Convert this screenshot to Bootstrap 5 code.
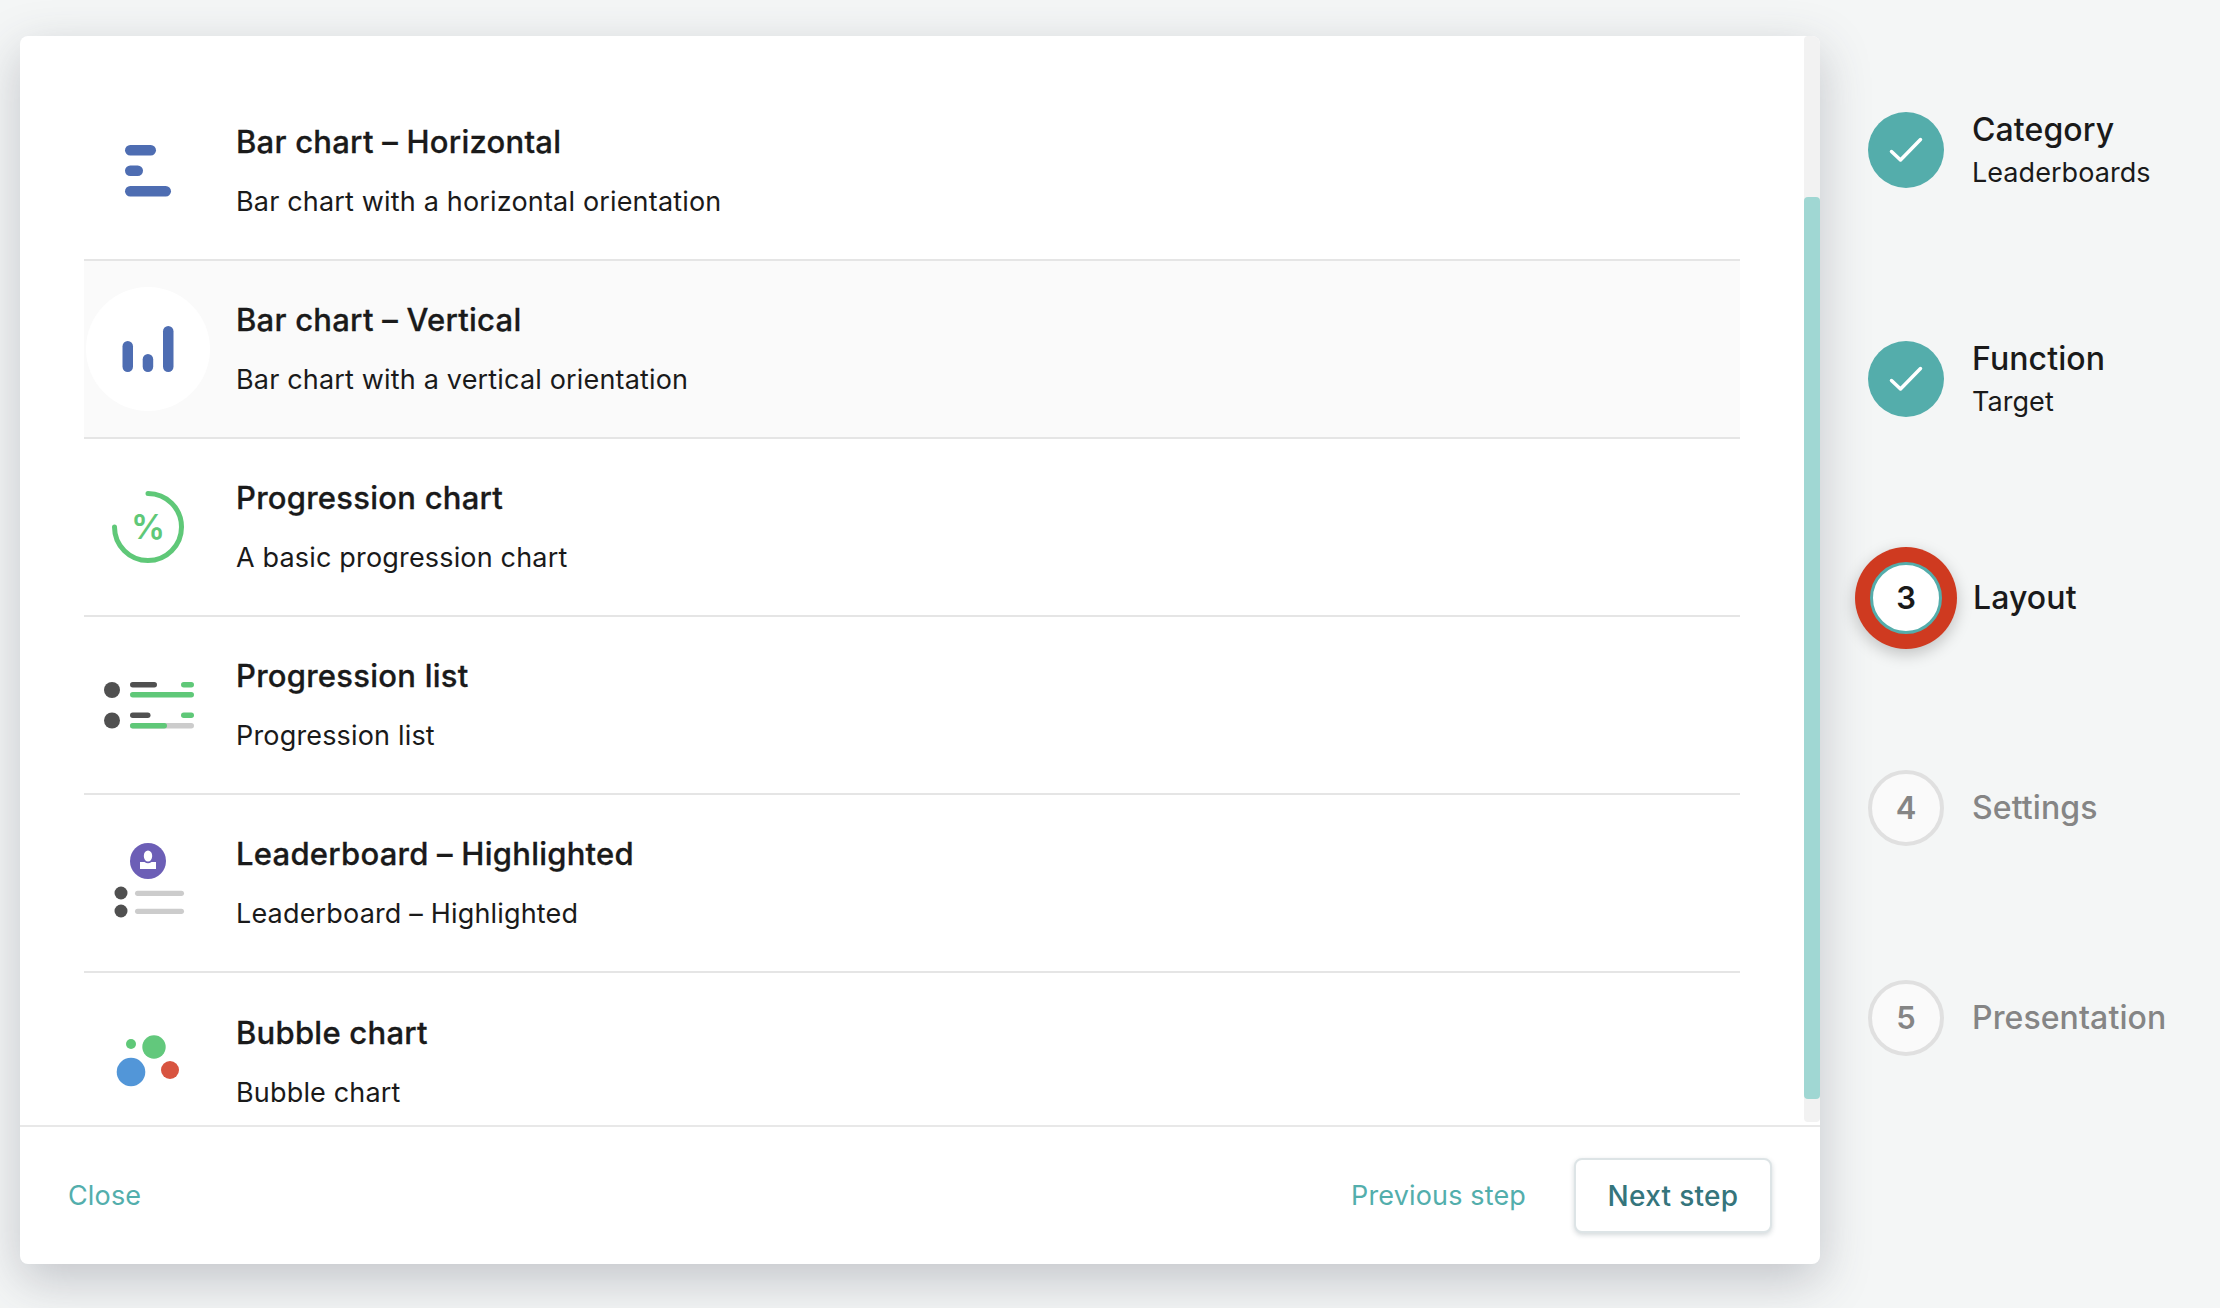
<!DOCTYPE html>
<html lang="en">
<head>
<meta charset="utf-8">
<title>Layout step</title>
<link href="https://cdn.jsdelivr.net/npm/bootstrap@5.3.0/dist/css/bootstrap.min.css" rel="stylesheet">
<style>
html, body { height: 100%; }
body { background: #f4f6f6; font-family: "Inter", "Liberation Sans", sans-serif; color: #1a1a1a; overflow: hidden; }
.shell { width: 2220px; height: 1308px; padding: 36px 0 44px 20px; }
.panel { width: 1800px; height: 1228px; background: #fff; border-radius: 8px; box-shadow: 0 16px 50px rgba(60,64,80,.27); overflow: hidden; }
.body-area { height: 1086px; }
.scroll-list { padding: 47px 64px 0; overflow: hidden; }
.row-item { height: 178px; border-bottom: 2px solid #e5e5e5; flex-shrink: 0; }
.row-item.hovered { background: #fafafa; }
.row-item:last-child { border-bottom: 0; }
.icon-box { width: 124px; height: 124px; margin-left: 2px; flex-shrink: 0; }
.icon-box.disc { background: #fff; border-radius: 50%; }
.text-box { margin-left: 26px; padding-top: 2px; }
.title-text { font-size: 31px; font-weight: 500; line-height: 40px; margin-bottom: 20px; letter-spacing: .25px; -webkit-text-stroke: .3px #1a1a1a; }
.sub-text { font-size: 27px; font-weight: 400; line-height: 40px; letter-spacing: .17px; }
.scroll-track { width: 16px; background: #f2f2f2; border-radius: 4px; flex-shrink: 0; padding-top: 161px; }
.scroll-thumb { height: 902px; background: #a0d7d3; border-radius: 4px; }
.foot-area { height: 139px; border-top: 2px solid #e8e8e8; margin-top: 3px; padding: 0 48px; }
.foot-link { font-size: 27px; color: #53aeac; text-decoration: none; letter-spacing: .15px; padding-top: 1px; }
.next-btn { width: 198px; height: 75px; background: #fff; border: 2px solid #dde4e6; border-radius: 8px; box-shadow: 0 2px 5px rgba(60,80,90,.22); font-size: 28px; font-weight: 500; color: #35757c; margin-left: 48px; letter-spacing: .3px; }
.steps-col { padding: 66px 0 0 48px; width: 400px; }
.step-item { height: 76px; margin-bottom: 134px; }
.step-item.tall { height: 95px; }
.step-dot { width: 76px; height: 76px; border-radius: 50%; flex-shrink: 0; font-size: 31px; font-weight: 600; }
.step-dot.done { background: #54adab; }
.step-dot.active { background: #fff; border: 3px solid #54adab; box-shadow: 0 0 0 15px #cf3a20, 0 5px 16px 15px rgba(0,0,0,.22); width: 72px; height: 72px; margin: 2px; color: #1a1a1a; }
.step-dot.todo { background: #fafafa; border: 4px solid #e0e0e0; color: #858585; }
.step-text { margin-left: 28px; }
.step-dot.active + .step-text { margin-left: 29px; }
.step-name { font-size: 32px; font-weight: 500; line-height: 40px; letter-spacing: .1px; }
.step-name.muted-name { color: #858585; }
.step-sub { font-size: 27px; line-height: 34px; margin-top: 5px; padding-top: 1px; letter-spacing: .05px; }
.pct { font-family: "Inter", sans-serif; font-size: 34px; font-weight: 600; fill: #5fc878; }
</style>
</head>
<body>
<div class="shell d-flex">
  <div class="panel d-flex flex-column flex-shrink-0">
    <div class="body-area d-flex">
      <div class="scroll-list flex-grow-1 d-flex flex-column">
        <div class="row-item d-flex align-items-center">
          <svg class="icon-box" viewBox="0 0 124 124"><g fill="#4e6db2"><rect x="39" y="36" width="31" height="10.5" rx="5.25"/><rect x="39" y="56.5" width="18" height="10.5" rx="5.25"/><rect x="39" y="77" width="46" height="10.5" rx="5.25"/></g></svg>
          <div class="text-box"><div class="title-text">Bar chart – Horizontal</div><div class="sub-text">Bar chart with a horizontal orientation</div></div>
        </div>
        <div class="row-item hovered d-flex align-items-center">
          <svg class="icon-box disc" viewBox="0 0 124 124"><g fill="#4e6db2"><rect x="36.5" y="54" width="10.5" height="31" rx="5.25"/><rect x="56.7" y="67" width="10.5" height="18" rx="5.25"/><rect x="77" y="39" width="10.5" height="46" rx="5.25"/></g></svg>
          <div class="text-box"><div class="title-text">Bar chart – Vertical</div><div class="sub-text">Bar chart with a vertical orientation</div></div>
        </div>
        <div class="row-item d-flex align-items-center">
          <svg class="icon-box" viewBox="0 0 124 124"><path d="M62 28.5A33.5 33.5 0 1 1 28.5 62" fill="none" stroke="#5fc878" stroke-width="5" stroke-linecap="round"/><text class="pct" x="62" y="74" text-anchor="middle">%</text></svg>
          <div class="text-box"><div class="title-text">Progression chart</div><div class="sub-text">A basic progression chart</div></div>
        </div>
        <div class="row-item d-flex align-items-center">
          <svg class="icon-box" viewBox="0 0 124 124"><g fill="#505050"><circle cx="26" cy="47" r="8"/><circle cx="26" cy="77.5" r="8"/><rect x="44" y="39" width="27" height="5.5" rx="2.75"/><rect x="44" y="69.5" width="20.5" height="5.5" rx="2.75"/></g><rect x="44" y="80" width="64" height="5.5" rx="2.75" fill="#cccccc"/><g fill="#5fc878"><rect x="95" y="39" width="13" height="5.5" rx="2.75"/><rect x="95" y="69.5" width="13" height="5.5" rx="2.75"/><rect x="44" y="49" width="64" height="5.5" rx="2.75"/><rect x="44" y="80" width="37" height="5.5" rx="2.75"/></g></svg>
          <div class="text-box"><div class="title-text">Progression list</div><div class="sub-text">Progression list</div></div>
        </div>
        <div class="row-item d-flex align-items-center">
          <svg class="icon-box" viewBox="0 0 124 124"><circle cx="62" cy="40" r="18" fill="#6c5eb6"/><ellipse cx="62" cy="35" rx="4.2" ry="5.5" fill="#fff"/><path d="M54 41h4.5q3.5 2.5 7 0H70v7H54z" fill="#fff"/><circle cx="35" cy="72" r="6.5" fill="#505050"/><circle cx="35" cy="90" r="6.5" fill="#505050"/><rect x="49" y="69.7" width="49" height="5.2" rx="2.6" fill="#cccccc"/><rect x="49" y="87.7" width="49" height="5.2" rx="2.6" fill="#cccccc"/></svg>
          <div class="text-box"><div class="title-text">Leaderboard – Highlighted</div><div class="sub-text">Leaderboard – Highlighted</div></div>
        </div>
        <div class="row-item d-flex align-items-center">
          <svg class="icon-box" viewBox="0 0 124 124"><circle cx="45" cy="44" r="5" fill="#5fc878"/><circle cx="68" cy="47" r="11.7" fill="#62c87c"/><circle cx="45" cy="72" r="14.3" fill="#5296d8"/><circle cx="84" cy="70" r="9" fill="#d85440"/></svg>
          <div class="text-box"><div class="title-text">Bubble chart</div><div class="sub-text">Bubble chart</div></div>
        </div>
      </div>
      <div class="scroll-track"><div class="scroll-thumb"></div></div>
    </div>
    <div class="foot-area d-flex align-items-center justify-content-between">
      <a class="foot-link" href="#">Close</a>
      <div class="d-flex align-items-center">
        <a class="foot-link" href="#">Previous step</a>
        <button class="next-btn d-flex align-items-center justify-content-center" type="button">Next step</button>
      </div>
    </div>
  </div>
  <div class="steps-col">
    <div class="step-item tall d-flex align-items-center">
      <div class="step-dot done d-flex align-items-center justify-content-center"><svg width="34" height="26" viewBox="0 0 34 26"><path d="M2.5 14.5 11.5 23 31.5 2.5" fill="none" stroke="#fff" stroke-width="3.5" stroke-linecap="round" stroke-linejoin="round"/></svg></div>
      <div class="step-text"><div class="step-name">Category</div><div class="step-sub">Leaderboards</div></div>
    </div>
    <div class="step-item tall d-flex align-items-center">
      <div class="step-dot done d-flex align-items-center justify-content-center"><svg width="34" height="26" viewBox="0 0 34 26"><path d="M2.5 14.5 11.5 23 31.5 2.5" fill="none" stroke="#fff" stroke-width="3.5" stroke-linecap="round" stroke-linejoin="round"/></svg></div>
      <div class="step-text"><div class="step-name">Function</div><div class="step-sub">Target</div></div>
    </div>
    <div class="step-item d-flex align-items-center">
      <div class="step-dot active d-flex align-items-center justify-content-center">3</div>
      <div class="step-text"><div class="step-name">Layout</div></div>
    </div>
    <div class="step-item d-flex align-items-center">
      <div class="step-dot todo d-flex align-items-center justify-content-center">4</div>
      <div class="step-text"><div class="step-name muted-name">Settings</div></div>
    </div>
    <div class="step-item d-flex align-items-center">
      <div class="step-dot todo d-flex align-items-center justify-content-center">5</div>
      <div class="step-text"><div class="step-name muted-name">Presentation</div></div>
    </div>
  </div>
</div>
<script src="https://cdn.jsdelivr.net/npm/bootstrap@5.3.0/dist/js/bootstrap.bundle.min.js"></script>
</body>
</html>
